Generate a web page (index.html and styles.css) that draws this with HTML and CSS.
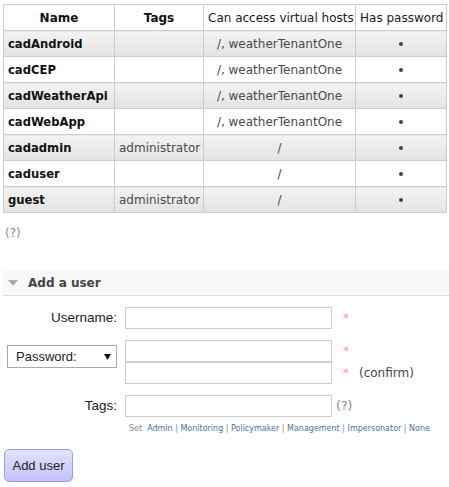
FILE: index.html
```
<!DOCTYPE html>
<html>
<head>
<meta charset="utf-8">
<link rel="stylesheet" href="styles.css">
</head>
<body>
<table class="list">
  <colgroup>
    <col class="c-name"><col class="c-tags"><col class="c-vh"><col class="c-pw">
  </colgroup>
  <thead>
    <tr><th class="b">Name</th><th class="b">Tags</th><th>Can access virtual hosts</th><th>Has password</th></tr>
  </thead>
  <tbody>
    <tr class="alt"><td class="name">cadAndroid</td><td></td><td>/, weatherTenantOne</td><td><span class="dot"></span></td></tr>
    <tr><td class="name">cadCEP</td><td></td><td>/, weatherTenantOne</td><td><span class="dot"></span></td></tr>
    <tr class="alt"><td class="name">cadWeatherApi</td><td></td><td>/, weatherTenantOne</td><td><span class="dot"></span></td></tr>
    <tr><td class="name">cadWebApp</td><td></td><td>/, weatherTenantOne</td><td><span class="dot"></span></td></tr>
    <tr class="alt"><td class="name">cadadmin</td><td>administrator</td><td>/</td><td><span class="dot"></span></td></tr>
    <tr><td class="name">caduser</td><td></td><td>/</td><td><span class="dot"></span></td></tr>
    <tr class="alt"><td class="name">guest</td><td>administrator</td><td>/</td><td><span class="dot"></span></td></tr>
  </tbody>
</table>
<div class="help">(?)</div>

<div class="section-head">
  <svg class="tri" width="10" height="6" viewBox="0 0 10 6"><path d="M0 0 H10 L5 6 Z" fill="#aaa"/></svg>
  <span class="section-title">Add a user</span>
</div>

<form class="form">
  <label class="lbl">Username:</label>
  <div class="fields"><input class="txt" type="text"></div>
  <div class="side"><span class="req">*</span></div>

  <div class="lbl sel-cell">
    <div class="sel-wrap">
      <select class="sel"><option>Password:</option></select>
      <svg class="sel-arrow" width="7" height="6" viewBox="0 0 7 6"><path d="M0 0 H7 L3.5 6 Z" fill="#111"/></svg>
    </div>
  </div>
  <div class="fields stack"><input class="txt" type="password"><input class="txt" type="password"></div>
  <div class="side stack">
    <div class="side-line"><span class="req">*</span></div>
    <div class="side-line"><span class="req">*</span><span class="confirm">(confirm)</span></div>
  </div>

  <label class="lbl">Tags:</label>
  <div class="fields"><input class="txt" type="text"></div>
  <div class="side"><span class="q">(?)</span></div>

  <div class="taglinks"><span class="set">Set</span><a>Admin</a> | <a>Monitoring</a> | <a>Policymaker</a> | <a>Management</a> | <a>Impersonator</a> | <a>None</a></div>
</form>

<button class="btn" type="button">Add user</button>
</body>
</html>
```
FILE: styles.css
```
html, body { margin: 0; padding: 0; background: #fff; }
body {
  font-family: "DejaVu Sans", Verdana, sans-serif;
  font-size: 12px;
  color: #222;
  padding: 0 0 0 3px;
}
table.list {
  border-collapse: collapse;
  table-layout: fixed;
  width: 443px;
  margin-top: 4px;
}
.c-name { width: 111px; }
.c-tags { width: 89px; }
.c-vh { width: 152px; }
.c-pw { width: 91px; }
table.list th, table.list td {
  border: 1px solid #ccc;
  height: 25px;
  padding: 0 4px;
  text-align: center;
  white-space: nowrap;
  color: #4a4a4a;
  font-weight: normal;
}
table.list th { color: #1a1a1a; background: #fff; }
table.list th.b { font-weight: bold; color: #111; }
table.list td.name { text-align: left; font-weight: bold; color: #111; font-size: 11.6px; }
table.list tr.alt td { background: linear-gradient(#f3f3f3, #e3e3e3); }
.dot {
  display: inline-block;
  width: 4px; height: 4px;
  border-radius: 50%;
  background: #444;
  vertical-align: middle;
}
.help {
  font-size: 12px;
  line-height: 14px;
  color: #998877;
  margin: 13px 0 0 2px;
}
.section-head {
  margin-top: 30px;
  height: 25px;
  background: #f8f8f8;
  border-bottom: 1px solid #ddd;
  display: flex;
  align-items: center;
  padding-left: 5px;
}
.tri { display: block; }
.section-title {
  margin-left: 10px;
  font-weight: bold;
  font-size: 12px;
  color: #444;
}
.form {
  display: grid;
  grid-template-columns: 114px 207px 1fr;
  column-gap: 8px;
  row-gap: 11px;
  margin-top: 11px;
}
.lbl {
  font-family: "Liberation Sans", Arial, sans-serif;
  font-size: 13.5px;
  color: #222;
  text-align: right;
  line-height: 22px;
}
.fields { display: flex; flex-direction: column; }
.txt {
  box-sizing: border-box;
  width: 207px;
  height: 22px;
  margin: 0;
  border: 1px solid #ccc;
  background: #fff;
  padding: 0 3px;
  outline: none;
}
.side { padding-left: 3px; line-height: 22px; }
.side-line { height: 22px; line-height: 22px; }
.req { color: #f99; font-size: 12px; }
.confirm { margin-left: 10px; color: #444; }
.q { color: #888; margin-left: -7px; font-size: 12.5px; }
.sel-cell { display: flex; justify-content: flex-end; align-items: flex-start; }
.sel-wrap { position: relative; margin-top: 5px; }
.sel {
  appearance: none;
  -webkit-appearance: none;
  box-sizing: border-box;
  width: 110px;
  height: 23px;
  margin: 0;
  border: 1px solid #a9a9a9;
  border-radius: 0;
  background: #fff;
  padding: 0 0 0 8px;
  font-family: "Liberation Sans", Arial, sans-serif;
  font-size: 13px;
  color: #222;
  text-align: left;
}
.sel-arrow { position: absolute; left: 97px; top: 9px; }
.taglinks {
  grid-column: 2 / 4;
  margin-top: -5px;
  padding-left: 4px;
  font-size: 8px;
  line-height: 12px;
  color: #888;
  white-space: nowrap;
}
.taglinks a { color: #4d6e9c; text-decoration: none; }
.set { margin-right: 5px; }
.btn {
  display: block;
  margin: 14px 0 0 1px;
  width: 69px;
  height: 33px;
  border: 1px solid #9a9ae0;
  border-radius: 5px;
  background: linear-gradient(#e2e2ff, #c2c2fa);
  font-family: "Liberation Sans", Arial, sans-serif;
  font-size: 13px;
  color: #222;
  padding: 0;
}
```
